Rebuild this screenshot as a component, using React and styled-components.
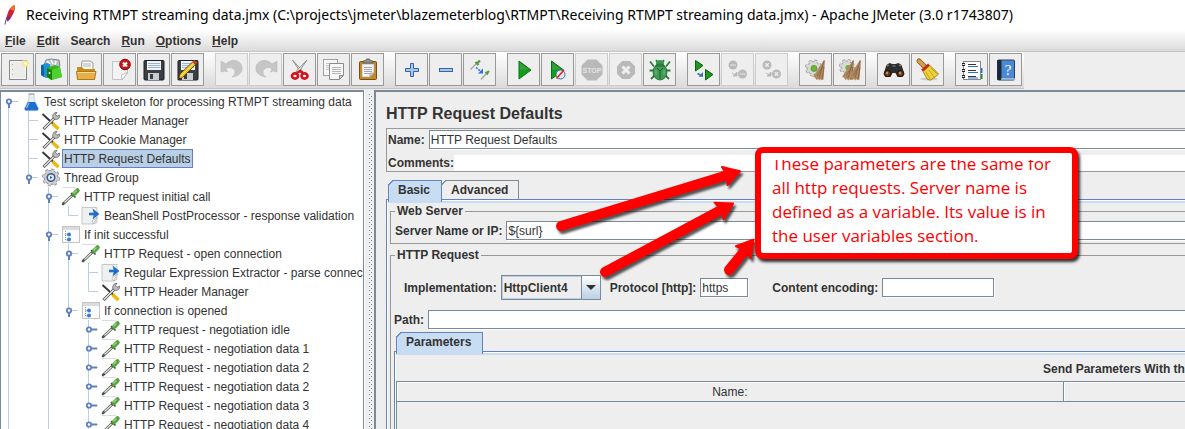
import React from "react";
import styled, { createGlobalStyle, css } from "styled-components";

const UI = `"Liberation Sans", Arial, sans-serif`;
const TITLE = `"Noto Sans", "Open Sans", sans-serif`;
const NOTE = `"Open Sans", "Noto Sans", sans-serif`;
const EDGE = "#7a8a99";
const TAB_EDGE = "#6382bf";
const TAB_FILL = "#c8ddf2";
const PANEL = "#eeeeee";
const INK = "#333333";

const GlobalStyle = createGlobalStyle`
  * { box-sizing: border-box; }
  body { margin: 0; background: ${PANEL}; }
  button, input, select { font: inherit; color: inherit; margin: 0; border-radius: 0; }
`;

const Window = styled.div`
  display: flex;
  flex-direction: column;
  height: 100vh;
  overflow: hidden;
  background: ${PANEL};
  color: ${INK};
  font: 12px/14px ${UI};
`;

const TitleBar = styled.header`
  display: flex;
  align-items: center;
  gap: 8px;
  flex: none;
  height: 30px;
  padding-left: 2px;
  background: #fff;
  color: #000;
`;

const Title = styled.h1`
  margin: 0;
  font: 400 14px/24px ${TITLE};
  white-space: nowrap;
`;

const MenuBar = styled.nav`
  display: flex;
  align-items: center;
  gap: 11px;
  flex: none;
  height: 22px;
  padding-left: 5px;
  background: linear-gradient(#fff, #dadada);
  border-bottom: 1px solid #c4c4c4;
`;

const MenuItem = styled.button`
  padding: 0;
  border: 0;
  background: none;
  font-weight: 700;
  line-height: 16px;
`;

const ToolBar = styled.div`
  display: flex;
  gap: 11px;
  flex: none;
  align-self: flex-start;
  height: 37px;
  padding: 1px 2px 0 1px;
  background: linear-gradient(#fff, #dadada);
  border-bottom: 1px solid #c4c4c4;
`;

const ToolGroup = styled.div`
  display: flex;
  gap: 1px;
`;

const ToolButton = styled.button`
  width: 33px;
  height: 33px;
  padding: 0;
  background: ${PANEL};
  border: 1px solid ${(p) => (p.disabled ? "#cccccc" : "#999999")};
  svg { display: block; width: 31px; height: 31px; }
`;

const Main = styled.main`
  display: flex;
  flex: 1;
  min-height: 0;
  margin-top: 1px;
`;

const TreePane = styled.div`
  flex: 0 0 364px;
  overflow: hidden;
  background: #fff;
  border: solid ${EDGE};
  border-width: 2px 1px 0;
`;

const TreeRow = styled.div`
  display: flex;
  align-items: center;
  height: 19px;
  svg { display: block; flex: none; }
`;

const NodeLabel = styled.span`
  flex: none;
  margin-left: 1px;
  padding: 1px 1px 0;
  border: 1px solid transparent;
  line-height: 16px;
  white-space: nowrap;
  ${(p) => p.$selected && css`
    background: #b8cfe5;
    border-color: ${TAB_EDGE};
  `}
`;

const Splitter = styled.div`
  flex: 0 0 10px;
  padding: 4px 0 0 4px;
  border-left: 1px solid #fff;
  &::after {
    content: "";
    display: block;
    width: 4px;
    height: 100%;
    background:
      conic-gradient(at 1px 1px, transparent 75%, ${EDGE} 0) 0 0 / 4px 4px,
      conic-gradient(at 1px 1px, transparent 75%, ${EDGE} 0) 2px 2px / 4px 4px;
  }
`;

const Editor = styled.section`
  position: relative;
  flex: 1;
  min-width: 0;
  overflow: hidden;
  padding-left: 10px;
  border: solid ${EDGE};
  border-width: 2px 0 0 2px;
`;

const Heading = styled.h2`
  margin: 0;
  padding: 12px 0 4px;
  font-size: 16px;
  line-height: 20px;
`;

const InfoBox = styled.div`
  display: flex;
  flex-direction: column;
  gap: 6px;
  padding: 1px 0 0 1px;
  border: solid #999;
  border-width: 1px 0 1px 1px;
`;

const FieldRow = styled.div`
  display: flex;
  align-items: center;
  gap: ${(p) => p.$gap || 0}px;
  ${(p) => p.$pad && css`padding: ${p.$pad};`}
`;

const Label = styled.label`
  flex: none;
  margin-left: ${(p) => p.$left || 0}px;
  font-weight: 700;
  white-space: nowrap;
`;

const TextField = styled.input`
  height: ${(p) => (p.$plain ? 16 : 19)}px;
  padding: 0 0 0 1px;
  background: #fff;
  outline: 0;
  border: ${(p) => (p.$plain ? 0 : `1px solid ${EDGE}`)};
  box-shadow: ${(p) => (p.$plain ? "none" : "1px 1px 0 #fff")};
  ${(p) => p.$width
    ? css`width: ${p.$width}px;`
    : css`flex: 1; min-width: 0; border-right: 0;`}
`;

const TabList = styled.div`
  display: flex;
  height: 19px;
  margin-top: ${(p) => p.$top}px;
  padding-left: 2px;
`;

const Tab = styled.button`
  position: relative;
  height: ${(p) => (p.$on ? 22 : 19)}px;
  padding: ${(p) => (p.$on ? "0 11px 3px 9px" : "0 10px 0 9px")};
  font-weight: 700;
  z-index: ${(p) => (p.$on ? 1 : 0)};
  background: ${(p) => (p.$on ? TAB_FILL : PANEL)};
  border: 1px solid ${(p) => (p.$on ? TAB_EDGE : EDGE)};
  border-bottom: 0;
  border-left-width: ${(p) => (p.$on ? 1 : 0)}px;
  &::before {
    content: "";
    position: absolute;
    left: -1px;
    top: -1px;
    width: 6px;
    height: 6px;
    background: linear-gradient(135deg, ${PANEL} 3px, ${(p) => (p.$on ? TAB_EDGE : EDGE)} 3px 4px, transparent 5px);
  }
`;

const TabPane = styled.div`
  padding: ${(p) => p.$pad};
  border: solid ${TAB_EDGE};
  border-width: 1px 0 0 1px;
  box-shadow: inset 1px 1px 0 #fff, inset 0 3px 0 ${TAB_FILL};
`;

const Group = styled.fieldset`
  min-width: 0;
  margin: 0 0 4px;
  padding: ${(p) => p.$pad};
  border: solid #999;
  border-width: 1px 0 1px 1px;
`;

const GroupTitle = styled.legend`
  margin-left: ${(p) => p.$shift}px;
  padding: 0 2px;
  font-weight: 700;
  line-height: 14px;
`;

const Combo = styled.div`
  display: grid;
  grid-template-columns: 1fr 19px;
  width: 100px;
  height: 25px;
  border: 1px solid ${EDGE};
  background: ${PANEL};
`;

const ComboSelect = styled.select`
  appearance: none;
  grid-area: 1 / 1 / 2 / 3;
  min-width: 0;
  padding: 0 20px 0 1px;
  border: 1px solid #b8cfe5;
  background: transparent;
  font-weight: 700;
  outline: 0;
`;

const ComboArrow = styled.span`
  display: grid;
  place-items: center;
  grid-area: 1 / 2;
  pointer-events: none;
  border-left: 1px solid ${EDGE};
  background: linear-gradient(#fff, #b8cfe5);
  &::after {
    content: "";
    border: 5px solid transparent;
    border-top-color: ${INK};
    border-bottom: 0;
  }
`;

const ParamsTitle = styled.div`
  padding: 9px 0 3px 82%;
  height: 28px;
  font-weight: 700;
  line-height: 14px;
  overflow: hidden;
  white-space: nowrap;
`;

const ParamsTable = styled.table`
  width: 100%;
  table-layout: fixed;
  border-collapse: separate;
  border-spacing: 0;
  border: solid ${EDGE};
  border-width: 1px 0 0 1px;
  th {
    height: 20px;
    padding: 1px 0 0;
    font-weight: 400;
    line-height: 14px;
    border: solid ${EDGE};
    border-width: 0 1px 1px 0;
    box-shadow: inset 1px 1px 0 #fff;
  }
  th:first-child { width: 84.6%; }
  th:last-child { border-right: 0; }
  td { height: 60px; }
`;

const Arrows = styled.svg`
  position: absolute;
  left: 174px;
  top: 60px;
  width: 220px;
  height: 140px;
  z-index: 2;
  pointer-events: none;
  filter: drop-shadow(2px 3px 1px rgba(0, 0, 0, 0.65));
`;

const Callout = styled.aside`
  position: absolute;
  left: 379px;
  top: 55px;
  z-index: 3;
  width: 323px;
  height: 112px;
  padding: 7px 0 0 11px;
  border: 6px solid #fe0000;
  border-radius: 8px;
  background: #fff;
  box-shadow: 2px 3px 3px rgba(0, 0, 0, 0.8);
`;

const CalloutClip = styled.div`
  overflow: hidden;
`;

const CalloutText = styled.p`
  margin: -8px 0 0;
  color: #fe0000;
  font: 400 17px/24px ${NOTE};
  white-space: nowrap;
`;

/* ---------- toolbar drawings, on the 33px grid of a button ---------- */

const lines = (x, w, ys, stroke = "#a8b4c4") =>
  ys.map((y) => <path key={y} d={`M${x} ${y}h${w}`} stroke={stroke} strokeWidth="1" />);

const Floppy = () => (
  <>
    <rect x="7" y="7.500" width="20" height="19.500" rx="1" fill="#3b3e42" stroke="#1d1f21" />
    <rect x="10" y="8" width="14" height="9" fill="#eef3f8" />
    {lines(11, 12, [10.5, 12.5, 14.5], "#9fb3c8")}
    <rect x="11" y="20" width="11" height="7" fill="#c9ccce" />
    <rect x="13" y="21" width="3" height="5" fill="#3b3e42" />
  </>
);
const Gear = ({ cx, cy, r, fill = "#d8d8d8", stroke = "#9a9a9a" }) => (
  <g>
    <circle cx={cx} cy={cy} r={r} fill="none" stroke={stroke} strokeWidth="4" strokeDasharray={`${(r * Math.PI) / 8} ${(r * Math.PI) / 8}`} />
    <circle cx={cx} cy={cy} r={r} fill={fill} stroke={stroke} strokeWidth="1" />
    <circle cx={cx} cy={cy} r={r} fill="none" stroke={fill} strokeWidth="2.400" strokeDasharray={`${(r * Math.PI) / 8} ${(r * Math.PI) / 8}`} />
  </g>
);
const Whisk = ({ x }) => (
  <g>
    <path d={`M${x + 9} 7l1 .5l-1.500 19l-2 .8l-1-1.300l-1 1.500l-1.500-1.500l-1.500 1l-1.500-2.500l-2-.5l5-8z`} fill="#b08a62" />
    <path d={`M${x + 9} 8l-5 17M${x + 8} 13l-6 10M${x + 9} 14l-2 12`} stroke="#7d5c3b" strokeWidth=".7" fill="none" />
  </g>
);
const octagon = (x, y, s) => {
  const a = s * 0.29;
  const b = s - a;
  return `M${x + a} ${y}H${x + b}L${x + s} ${y + a}V${y + b}L${x + b} ${y + s}H${x + a}L${x} ${y + b}V${y + a}z`;
};

const icons = {
  New: (
    <>
      <rect x="8.500" y="7.500" width="17" height="19" fill="#f6f6f4" stroke="#8a8a88" />
      <rect x="10" y="9" width="14" height="16" fill="#ececea" />
      <path d="M11.500 11v1M11.500 16v1M11.500 21v1" stroke="#aaa" />
      <circle cx="24.500" cy="10.500" r="4" fill="#f4ee9a" opacity=".6" />
      <circle cx="24.500" cy="10.500" r="2" fill="#fffce0" stroke="#efe68a" />
    </>
  ),
  Templates: (
    <>
      <path d="M9 12l2-5 5-1 8 1 1 6-8 5z" fill="#b9c2c8" stroke="#7f8a92" />
      <path d="M12 8l3 3M16 7l2 4M21 8l-1 4" stroke="#fff" strokeWidth="1.500" />
      <path d="M6 12l6-2 3 1v13l-4 1-5-3z" fill="#1f8fd8" />
      <path d="M6 12l3 1v11l-3-2z" fill="#0d64ab" />
      <path d="M12 15l8-3 5 2 2 10-11 3-4-3z" fill="#35b51f" />
      <path d="M12 15l5 2v10l-5-3z" fill="#16800c" />
      <path d="M17 17l8-3 2 10-10 3z" fill="#4ed02f" />
      <circle cx="14.500" cy="20" r="1" fill="#d5f5cc" />
    </>
  ),
  Open: (
    <>
      <path d="M13 8h8l3 2v8H12z" fill="#f5f5f5" stroke="#9b9b9b" />
      {lines(14, 8, [11, 13], "#b5b5b5")}
      <path d="M8 14h5l2 2h11v10H8z" fill="#c98d1e" />
      <path d="M7.500 18.500h19.500l-1.500 8H8.500z" fill="#e8b04a" stroke="#b4770f" />
      <path d="M8.500 19.500h17.500" stroke="#f8dc9c" />
    </>
  ),
  Close: (
    <>
      <path d="M9.500 8.500h15V20l-5 6.500h-10z" fill="#f3f3f3" stroke="#c4c4c4" />
      <path d="M25 19l-6 8-.5-5z" fill="#fff" stroke="#b4b4b4" strokeWidth=".8" />
      <circle cx="22" cy="11.500" r="5.300" fill="#c81414" stroke="#8e0606" />
      <path d="M20 9.500l4 4M24 9.500l-4 4" stroke="#fff" strokeWidth="2" />
    </>
  ),
  Save: <Floppy />,
  "Save as": (
    <>
      <Floppy />
      <path d="M7 27l2-6L21.500 9l3 2.500-13 13z" fill="#f0c020" stroke="#5a3a00" strokeWidth=".8" />
      <path d="M10 23L22.500 10.500" stroke="#fff3a0" strokeWidth=".8" />
      <path d="M7 27l1-3 2 2z" fill="#222" />
      <path d="M21.500 9l2-2 3 2.500-2 2z" fill="#c23a2a" />
    </>
  ),
  Undo: <path d="M6 8v11l4-1 2.500 1-1.500-3c3-3 9-1 9 3 0 2-1 4-3 5 7-1 11-5 10-10-1-7-11-9-16-3z" fill="#c6c6c6" stroke="#bbb" strokeWidth=".7" />,
  Redo: <path d="M28 8v11l-4-1-2.500 1 1.500-3c-3-3-9-1-9 3 0 2 1 4 3 5-7-1-11-5-10-10 1-7 11-9 16-3z" fill="#c6c6c6" stroke="#bbb" strokeWidth=".7" />,
  Cut: (
    <>
      <path d="M9.500 7l8.500 13 2-1.500z" fill="#dfe3e3" stroke="#888" strokeWidth=".9" />
      <path d="M24 7l-9 13-2-1.500z" fill="#f1f3f3" stroke="#888" strokeWidth=".9" />
      <ellipse cx="12" cy="23" rx="3" ry="2.600" fill="none" stroke="#d3131b" strokeWidth="2.600" />
      <ellipse cx="21.500" cy="23" rx="3" ry="2.600" fill="none" stroke="#d3131b" strokeWidth="2.600" />
      <path d="M14 20l3-2 3 2" stroke="#d3131b" strokeWidth="2.400" fill="none" />
    </>
  ),
  Copy: (
    <>
      <rect x="6.500" y="6.500" width="14" height="16" fill="#f6f6f6" stroke="#a2a2a2" />
      {lines(9, 9, [10.5, 12.5, 14.5, 16.5], "#c4c4c4")}
      <path d="M12.500 10.500h14v12l-4 4h-10z" fill="#f8f8f8" stroke="#8c8c8c" />
      {lines(15, 9, [14.5, 16.5, 18.5, 20.5], "#b4b4b4")}
      <path d="M26.500 22.500h-4v4z" fill="#ccc" stroke="#8c8c8c" />
    </>
  ),
  Paste: (
    <>
      <rect x="8.500" y="8.500" width="17" height="18" rx="1" fill="#c58b1f" stroke="#7b4d0a" />
      <path d="M11 11h12v9l-4 4h-8z" fill="#f8f8f8" stroke="#a5a5a5" strokeWidth=".7" />
      {lines(13, 8, [14.5, 16.5, 18.5, 20.5], "#a4a4a4")}
      <path d="M23 20h-4v4z" fill="#ccc" stroke="#888" strokeWidth=".5" />
      <path d="M12 10V8l3-.5.5-1.500h3l.5 1.500 3 .5v2z" fill="#8e9490" stroke="#50554f" strokeWidth=".8" />
    </>
  ),
  "Expand all": <path d="M15.500 10.500h3v5h5v3h-5v5h-3v-5h-5v-3h5z" fill="#a9c6e6" stroke="#3465a4" />,
  "Collapse all": <rect x="10.500" y="15.500" width="13" height="3" fill="#a9c6e6" stroke="#3465a4" />,
  Toggle: (
    <>
      <path d="M7.500 16.500l6-6" stroke="#a4aaa4" strokeWidth="1.500" />
      <path d="M12.500 9l3 3M14 10.500l3-3" stroke="#5a9a45" strokeWidth="2.400" />
      <path d="M18 26.500l5-5.500" stroke="#a4aaa4" strokeWidth="1.500" />
      <path d="M22.500 19l2.500 2.500M23.500 20.500l2.500-2.500" stroke="#5a9a45" strokeWidth="2.200" />
      <path d="M13 14.500l5 4" stroke="#2a71d8" strokeWidth="1.500" strokeDasharray="2 1" />
      <path d="M20 15.500v5h-5z" fill="#2a71d8" />
    </>
  ),
  Start: (
    <>
      <path d="M12 8l12 9-12 9z" fill="#0fa018" stroke="#0c6f10" />
      <path d="M12.800 10l8.700 6.500h-8.700z" fill="#3f9a44" />
    </>
  ),
  "Start no pauses": (
    <>
      <path d="M10.500 8l12 9-12 9z" fill="#0fa018" stroke="#0c6f10" />
      <path d="M11.300 10l8.700 6.500h-8.700z" fill="#3f9a44" />
      <circle cx="19.500" cy="21.500" r="4.500" fill="#dfe9f5" stroke="#3a6ea8" />
      <path d="M23 17l-7.500 8.500" stroke="#e02020" strokeWidth="1.500" />
    </>
  ),
  Stop: (
    <>
      <path d={octagon(6.5, 6.5, 21)} fill="#b9b9b9" />
      <text x="17" y="20" textAnchor="middle" fontFamily="Liberation Sans" fontWeight="700" fontSize="7" fill="#e4e4e4">STOP</text>
    </>
  ),
  Shutdown: (
    <>
      <path d={octagon(8, 8, 18)} fill="#b9b9b9" />
      <path d="M13.500 13.500l7 7M20.500 13.500l-7 7" stroke="#eee" strokeWidth="3" />
    </>
  ),
  Debug: (
    <>
      <path d="M7 8.500l4 5M27 8.500l-4 5M6.500 17.500h6M27.500 17.500h-6M8 26l4-4M26 26l-4-4M13 7l2 3M21 7l-2 3" stroke="#2e7d3c" strokeWidth="1.800" />
      <circle cx="17" cy="11" r="4" fill="#3f9350" />
      <ellipse cx="17" cy="19" rx="7" ry="8" fill="#3f9a52" stroke="#23652f" strokeWidth=".8" />
      <path d="M17 17v9M12 13h10M14 15l3 3 3-3" stroke="#1d5a29" strokeWidth=".9" />
      <path d="M13 17v5M21 17v5" stroke="#6cb87a" strokeWidth="1.200" />
    </>
  ),
  "Remote start": (
    <>
      <path d="M8.500 7.500l7.500 5-7.500 5.500z" fill="#1c9a20" stroke="#0c5f10" />
      <path d="M18.500 16.500l7.500 5-7.500 5.500z" fill="#1c9a20" stroke="#0c5f10" />
      <path d="M10.500 20.500l3 1.500" stroke="#3b6fb5" strokeWidth="1.600" />
      <path d="M16 19v5l-4.500-.5z" fill="#3b6fb5" />
    </>
  ),
  "Remote stop": (
    <>
      <circle cx="12" cy="12" r="4.500" fill="#b9b9b9" />
      <circle cx="21.500" cy="21" r="4.500" fill="#b9b9b9" />
      <path d="M9 12h6M18.500 21h6" stroke="#d6d6d6" strokeWidth="1.500" />
      <path d="M11 20l4.500 2.500M16 19v4h-4z" stroke="#b9b9b9" fill="#b9b9b9" />
    </>
  ),
  "Remote shutdown": (
    <>
      <circle cx="12" cy="12" r="4.500" fill="#b9b9b9" />
      <circle cx="21.500" cy="21" r="4.500" fill="#b9b9b9" />
      <path d="M10.300 10.300l3.400 3.400M13.700 10.300l-3.400 3.400M19.800 19.300l3.400 3.400M23.200 19.300l-3.400 3.400" stroke="#ececec" strokeWidth="1.500" />
      <path d="M11 20l4.500 2.500M16 19v4h-4z" stroke="#b9b9b9" fill="#b9b9b9" />
    </>
  ),
  Clear: (
    <>
      <Gear cx={14.5} cy={15} r={6.5} />
      <circle cx="15" cy="15.500" r="3" fill="#66b82e" stroke="#4a8a20" strokeWidth=".7" />
      <Whisk x={16} />
    </>
  ),
  "Clear all": (
    <>
      <Gear cx={14} cy={14} r={6} />
      <circle cx="15" cy="14.500" r="2.600" fill="#66b82e" />
      <Whisk x={11} />
      <Whisk x={18} />
    </>
  ),
  Find: (
    <>
      <path d="M6.500 21l3-9 3-2 3 1h3l3-1 3 2 3 9-2 3h-5l-2-4h-3l-2 4h-5z" fill="#2c2c2e" />
      <path d="M10 13l2-1M22 12l2 1M15.500 13h3" stroke="#8a8a8c" strokeWidth="1.200" />
      <circle cx="10.500" cy="20.500" r="3" fill="#7a3f18" stroke="#111" />
      <circle cx="23.500" cy="20.500" r="3" fill="#7a3f18" stroke="#111" />
      <circle cx="10" cy="20" r="1.200" fill="#d8874a" />
      <circle cx="23" cy="20" r="1.200" fill="#d8874a" />
    </>
  ),
  "Reset search": (
    <>
      <ellipse cx="18" cy="26" rx="9" ry="1.500" fill="#ccc" />
      <path d="M8 8l7 7" stroke="#8b5a18" strokeWidth="5" strokeLinecap="round" />
      <path d="M8 8l7 7" stroke="#d6a04a" strokeWidth="3.200" strokeLinecap="round" />
      <path d="M12 18.500l7-6 8.500 8.500-2 2-6 4-3-.5z" fill="#edd23a" stroke="#a98a10" />
      <path d="M15 19l4 7M18 17l5 7M20 15l6 6" stroke="#b89a18" strokeWidth=".8" />
      <path d="M11 17.500l7-6" stroke="#cc2222" strokeWidth="2.500" />
    </>
  ),
  "Function helper": (
    <>
      <rect x="8.500" y="8.500" width="17" height="18" fill="#fdfdfd" stroke="#888" />
      {lines(13, 8, [11.5, 17.5, 23.5], "#333")}
      {lines(13, 10, [13.5, 19.5, 25], "#2f6fd0")}
      <path d="M7 11.500h3M7 17.500h3M7 23.500h3" stroke="#222" strokeWidth="3" />
      <path d="M7.500 11.500h2M7.500 17.500h2M7.500 23.500h2" stroke="#fff" strokeWidth="1" />
      <rect x="26" y="15" width="1.500" height="5" fill="#2f6fd0" />
      <rect x="26" y="21" width="1.500" height="5" fill="#1b8f2f" />
    </>
  ),
  Help: (
    <>
      <rect x="8.500" y="7" width="17" height="20" rx="1" fill="#4a8ad4" stroke="#2b3f5c" />
      <rect x="8.500" y="7" width="4" height="20" fill="#1b2636" />
      <path d="M12 26h14" stroke="#cfd6de" strokeWidth="1.200" />
      <text x="19" y="22" textAnchor="middle" fontFamily="Liberation Serif" fontSize="15" fill="#fff">?</text>
    </>
  ),
};

const toolGroups = [
  ["New", "Templates", "Open", "Close", "Save", "Save as"],
  ["Undo", "Redo", "Cut", "Copy", "Paste"],
  ["Expand all", "Collapse all", "Toggle"],
  ["Start", "Start no pauses", "Stop", "Shutdown", "Debug"],
  ["Remote start", "Remote stop", "Remote shutdown"],
  ["Clear", "Clear all"],
  ["Find", "Reset search"],
  ["Function helper", "Help"],
];
const disabledTools = ["Undo", "Redo", "Stop", "Shutdown", "Remote stop", "Remote shutdown"];

const Feather = () => (
  <svg width="16" height="22" viewBox="0 0 16 22" aria-hidden="true">
    <path d="M3 20.500C4 15 6 8 12.500 2.500" stroke="#5b2a78" strokeWidth="1" fill="none" />
    <path d="M12 1c1.500 1 1 5-.5 8-1 2.500-3 6-6 8.500C4 13 6 4 12 1z" fill="#c9243a" />
    <path d="M12 1c1.500 1 1 3-.3 5.500L8 5.500C9 3.500 10.500 1.700 12 1z" fill="#ee7a26" />
    <path d="M5.300 12l3.500 1.800c-1 1.500-2 2.700-3.300 3.700-.5-2-.5-3.500-.2-5.500z" fill="#83267a" />
  </svg>
);

/* ---------- test plan tree ---------- */

const nodeIcons = {
  plan: (
    <>
      <path d="M8 2h5v5l4.500 9.500-1 1.500h-12l-1-1.500L8 7z" fill="#e6eff7" stroke="#b4c2ce" strokeWidth=".8" />
      <path d="M7 10h7l3.500 7-1 1.500h-12l-1-1.500z" fill="#1d6fd0" />
      <path d="M8 11l-2.500 5" stroke="#8fc0f0" strokeWidth="1.300" />
      <path d="M7.500 2h6" stroke="#999" />
    </>
  ),
  config: (
    <>
      <path d="M1.500 3l12 11" stroke="#333" strokeWidth="1.800" />
      <path d="M11.500 12.500l6 5.500" stroke="#edb90e" strokeWidth="3.600" />
      <path d="M2.500 18L14 6.500" stroke="#555" strokeWidth="3" />
      <path d="M3 17.500L14 6.500" stroke="#e4e4e4" strokeWidth="1.400" />
      <path d="M12 7c-1-3 1-6 4-5.500L14.500 3.500l1.500 1.800L18.500 4c1 3-2.500 5.500-5 4z" fill="#bcbcbc" stroke="#555" strokeWidth=".7" />
    </>
  ),
  threads: (
    <>
      <Gear cx={10} cy={9.5} r={7} fill="#cfcfcf" stroke="#909090" />
      <circle cx="10" cy="9.500" r="4.500" fill="#39598f" />
      <circle cx="10" cy="9.500" r="3" fill="#dfe9f8" />
      <path d="M9 8l2.500 1.500L9 11z" fill="#39598f" />
    </>
  ),
  sampler: (
    <>
      <path d="M1 .5h14" stroke="#cfcfcf" strokeWidth=".7" />
      <path d="M2 17L11 8.500" stroke="#505450" strokeWidth="2.600" strokeLinecap="round" />
      <path d="M3.500 15.500L10.500 9" stroke="#e3e8e3" strokeWidth="1.200" />
      <path d="M10 6l4.500 4.500" stroke="#3e4a3a" strokeWidth="1.600" />
      <path d="M13 7L16.500 3.500" stroke="#56a23e" strokeWidth="4.500" strokeLinecap="round" />
      <path d="M12.500 6.500L15.500 3.500" stroke="#9ad586" strokeWidth="1.400" />
    </>
  ),
  post: (
    <>
      <path d="M1 1.500h15v15l-4 1.500H1z" fill="#eef0f2" stroke="#bbb" strokeWidth=".8" />
      <path d="M16.500 11l-4 7-1.500-3z" fill="#fff" stroke="#aaa" strokeWidth=".7" />
      <path d="M8 8h6" stroke="#1f6fc8" strokeWidth="2.600" />
      <path d="M11.500 2.500l7 5.500-7 5.500 1.500-5.500z" fill="#1f6fc8" />
    </>
  ),
  controller: (
    <>
      <rect x="1.500" y="1.500" width="17" height="16" fill="#fcfcfc" stroke="#c4c4c4" />
      <path d="M2 3.500h16" stroke="#dcdcdc" strokeWidth="3" />
      <path d="M4.500 6v9h3M4.500 9.500h3" stroke="#777" strokeWidth=".8" fill="none" strokeDasharray="1 1" />
      <circle cx="8" cy="9.500" r="2" fill="#2f7fd0" />
      <circle cx="8" cy="14.500" r="2" fill="#2f7fd0" />
    </>
  ),
};

const NodeIcon = ({ kind }) => (
  <svg width="20" height="19" viewBox="0 0 20 19" fill="none" aria-hidden="true">{nodeIcons[kind]}</svg>
);

// Guide codes: | line, t branch, l last branch, o open, O open and last, r root, c closed, . blank
const Guide = ({ code }) => (
  <svg width="20" height="19" viewBox="0 0 20 19" fill="none" aria-hidden="true">
    {"|tolOc".includes(code) && <path d="M7.500 0v9.500" stroke="#b8cfe5" />}
    {"|torc".includes(code) && <path d="M7.500 9v10" stroke="#b8cfe5" />}
    {"tlorOc".includes(code) && <path d="M7.500 9.500h9.500" stroke="#b8cfe5" />}
    {"orO".includes(code) && <path d="M8 12v4" stroke="#5f7fbd" strokeWidth="2" />}
    {code === "c" && <path d="M11 9.500h5" stroke="#5f7fbd" strokeWidth="2" />}
    {"orOc".includes(code) && <circle cx="8" cy="9.500" r="2.200" fill="#fff" stroke="#5f7fbd" strokeWidth="1.800" />}
  </svg>
);

const treeNodes = [
  ["r", "plan", "Test script skeleton for processing RTMPT streaming data"],
  ["|t", "config", "HTTP Header Manager"],
  ["|t", "config", "HTTP Cookie Manager"],
  ["|t", "config", "HTTP Request Defaults", true],
  ["|O", "threads", "Thread Group"],
  ["|.o", "sampler", "HTTP request initial call"],
  ["|.|l", "post", "BeanShell PostProcessor - response validation"],
  ["|.o", "controller", "If init successful"],
  ["|.|o", "sampler", "HTTP Request - open connection"],
  ["|.||t", "post", "Regular Expression Extractor - parse connection"],
  ["|.||l", "config", "HTTP Header Manager"],
  ["|.|O", "controller", "If connection is opened"],
  ["|.|.c", "sampler", "HTTP request - negotiation idle"],
  ["|.|.c", "sampler", "HTTP Request - negotiation data 1"],
  ["|.|.c", "sampler", "HTTP Request - negotiation data 2"],
  ["|.|.c", "sampler", "HTTP Request - negotiation data 2"],
  ["|.|.c", "sampler", "HTTP Request - negotiation data 3"],
  ["|.|.c", "sampler", "HTTP Request - negotiation data 4"],
];

const menus = [["F", "ile"], ["E", "dit"], ["", "Search"], ["R", "un"], ["O", "ptions"], ["H", "elp"]];

const Arrow = ({ from, to }) => {
  const dx = to[0] - from[0];
  const dy = to[1] - from[1];
  const len = Math.hypot(dx, dy);
  const deg = (Math.atan2(dy, dx) * 180) / Math.PI;
  return (
    <g transform={`translate(${from[0]} ${from[1]}) rotate(${deg})`}>
      <path d={`M0 0H${len - 13}`} stroke="#fe0000" strokeWidth="10" strokeLinecap="round" />
      <path d={`M${len - 17} -9.500L${len - 1} 0L${len - 17} 9.500L${len - 14} 0z`} fill="#fe0000" stroke="#fe0000" strokeWidth="2" strokeLinejoin="round" />
    </g>
  );
};

export default function App() {
  return (
    <Window>
      <GlobalStyle />
      <TitleBar>
        <Feather />
        <Title>Receiving RTMPT streaming data.jmx (C:\projects\jmeter\blazemeterblog\RTMPT\Receiving RTMPT streaming data.jmx) - Apache JMeter (3.0 r1743807)</Title>
      </TitleBar>
      <MenuBar>
        {menus.map(([key, rest]) => (
          <MenuItem key={rest}>{key && <u>{key}</u>}{rest}</MenuItem>
        ))}
      </MenuBar>
      <ToolBar>
        {toolGroups.map((group) => (
          <ToolGroup key={group[0]}>
            {group.map((name) => (
              <ToolButton key={name} aria-label={name} disabled={disabledTools.includes(name)}>
                <svg viewBox="1 1 31 31" fill="none" aria-hidden="true">{icons[name]}</svg>
              </ToolButton>
            ))}
          </ToolGroup>
        ))}
      </ToolBar>
      <Main>
        <TreePane>
          {treeNodes.map(([guides, kind, text, selected], i) => (
            <TreeRow key={i}>
              {guides.split("").map((code, k) => <Guide key={k} code={code} />)}
              <NodeIcon kind={kind} />
              <NodeLabel $selected={selected}>{text}</NodeLabel>
            </TreeRow>
          ))}
        </TreePane>
        <Splitter />
        <Editor>
          <Heading>HTTP Request Defaults</Heading>
          <InfoBox>
            <FieldRow $gap={4}>
              <Label htmlFor="name">Name:</Label>
              <TextField id="name" defaultValue="HTTP Request Defaults" />
            </FieldRow>
            <FieldRow>
              <Label htmlFor="comments">Comments:</Label>
              <TextField id="comments" $plain />
            </FieldRow>
          </InfoBox>
          <TabList $top={8}>
            <Tab $on>Basic</Tab>
            <Tab>Advanced</Tab>
          </TabList>
          <TabPane $pad="4px 0 0 3px">
            <Group $pad="3px 0 3px 4px">
              <GroupTitle $shift={0}>Web Server</GroupTitle>
              <FieldRow $gap={4}>
                <Label htmlFor="server">Server Name or IP:</Label>
                <TextField id="server" defaultValue="${surl}" />
              </FieldRow>
            </Group>
            <Group $pad="13px 0 8px 3px">
              <GroupTitle $shift={1}>HTTP Request</GroupTitle>
              <FieldRow $gap={4} $pad="0 0 10px 10px">
                <Label htmlFor="impl">Implementation:</Label>
                <Combo>
                  <ComboSelect id="impl" defaultValue="HttpClient4">
                    <option>HttpClient4</option>
                  </ComboSelect>
                  <ComboArrow />
                </Combo>
                <Label $left={5} htmlFor="protocol">Protocol [http]:</Label>
                <TextField id="protocol" $width={48} defaultValue="https" />
                <Label $left={20} htmlFor="encoding">Content encoding:</Label>
                <TextField id="encoding" $width={112} />
              </FieldRow>
              <FieldRow $gap={4}>
                <Label htmlFor="path">Path:</Label>
                <TextField id="path" />
              </FieldRow>
              <TabList $top={3}>
                <Tab $on>Parameters</Tab>
              </TabList>
              <TabPane $pad="1px 0 0 1px">
                <ParamsTitle>Send Parameters With the Request:</ParamsTitle>
                <ParamsTable>
                  <thead>
                    <tr><th>Name:</th><th aria-label="Value" /></tr>
                  </thead>
                  <tbody>
                    <tr><td /><td /></tr>
                  </tbody>
                </ParamsTable>
              </TabPane>
            </Group>
          </TabPane>
          <Arrows fill="none" aria-hidden="true">
            <Arrow from={[11, 74]} to={[191, 19]} />
            <Arrow from={[55, 120]} to={[184, 51]} />
            <Arrow from={[179, 118]} to={[204, 87]} />
          </Arrows>
          <Callout>
            <CalloutClip>
              <CalloutText>
                These parameters are the same for<br />
                all http requests. Server name is<br />
                defined as a variable. Its value is in<br />
                the user variables section.
              </CalloutText>
            </CalloutClip>
          </Callout>
        </Editor>
      </Main>
    </Window>
  );
}
